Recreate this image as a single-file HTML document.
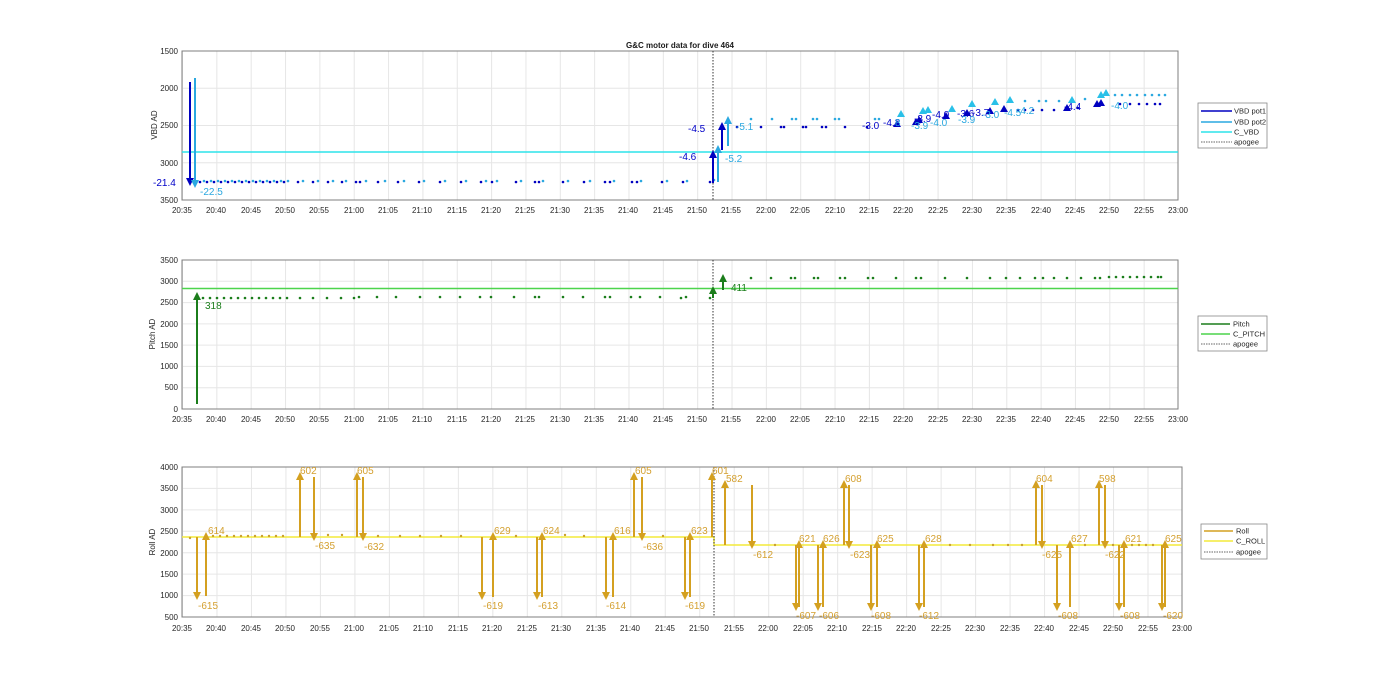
<!DOCTYPE html>
<html><head><meta charset="utf-8"><style>
html,body{margin:0;padding:0;background:#fff;}
svg{display:block;font-family:"Liberation Sans",Arial,sans-serif;}
.t{font-size:8px;fill:#262626;}
.tl{font-size:8px;fill:#262626;text-anchor:middle;}
.tr{font-size:8px;fill:#262626;text-anchor:end;}
.lg{font-size:7.5px;fill:#262626;}
.b1{fill:#0000c8;font-size:10px;}
.b2{fill:#2aa8e0;font-size:10px;}
.g{fill:#1b7d1b;font-size:10px;}
.r{fill:#d4a030;font-size:10px;}
</style></head><body>
<svg width="1400" height="693" viewBox="0 0 1400 693">
<defs>
<pattern id="vg" x="182" y="0" width="34.345" height="700" patternUnits="userSpaceOnUse"><line x1="0.5" y1="0" x2="0.5" y2="700" stroke="#e6e6e6" stroke-width="1"/></pattern>
</defs>
<rect width="1400" height="693" fill="#fff"/>
<text x="680" y="48" style="font-size:8px;font-weight:bold;fill:#1a1a1a" text-anchor="middle">G&amp;C motor data for dive 464</text>

<!-- ===== Panel 1 ===== -->
<rect x="182" y="51" width="996" height="149" fill="url(#vg)"/>
<g stroke="#e6e6e6"><line x1="182" y1="88.25" x2="1178" y2="88.25"/><line x1="182" y1="125.5" x2="1178" y2="125.5"/><line x1="182" y1="162.75" x2="1178" y2="162.75"/></g>
<rect x="182" y="51" width="996" height="149" fill="none" stroke="#7f7f7f" stroke-width="1"/>
<g class="tr"><text x="178" y="54">1500</text><text x="178" y="91">2000</text><text x="178" y="128">2500</text><text x="178" y="166">3000</text><text x="178" y="203">3500</text></g>
<text class="t" transform="translate(157,125) rotate(-90)" text-anchor="middle">VBD AD</text>
<g class="tl"><text x="182" y="213">20:35</text><text x="216" y="213">20:40</text><text x="251" y="213">20:45</text><text x="285" y="213">20:50</text><text x="319" y="213">20:55</text><text x="354" y="213">21:00</text><text x="388" y="213">21:05</text><text x="422" y="213">21:10</text><text x="457" y="213">21:15</text><text x="491" y="213">21:20</text><text x="525" y="213">21:25</text><text x="560" y="213">21:30</text><text x="594" y="213">21:35</text><text x="628" y="213">21:40</text><text x="663" y="213">21:45</text><text x="697" y="213">21:50</text><text x="731" y="213">21:55</text><text x="766" y="213">22:00</text><text x="800" y="213">22:05</text><text x="835" y="213">22:10</text><text x="869" y="213">22:15</text><text x="903" y="213">22:20</text><text x="938" y="213">22:25</text><text x="972" y="213">22:30</text><text x="1006" y="213">22:35</text><text x="1041" y="213">22:40</text><text x="1075" y="213">22:45</text><text x="1109" y="213">22:50</text><text x="1144" y="213">22:55</text><text x="1178" y="213">23:00</text></g>
<line x1="182" y1="152" x2="1178" y2="152" stroke="#2de3ea" stroke-width="1.5"/>
<line x1="713" y1="51" x2="713" y2="200" stroke="#333" stroke-width="1" stroke-dasharray="1.5,1.5"/>
<!-- dots pre apogee -->
<g fill="#0000c0">
<circle cx="200" cy="182" r="1.3"/><circle cx="207" cy="182" r="1.3"/><circle cx="214" cy="182" r="1.3"/><circle cx="221" cy="182" r="1.3"/><circle cx="228" cy="182" r="1.3"/><circle cx="235" cy="182" r="1.3"/><circle cx="242" cy="182" r="1.3"/><circle cx="249" cy="182" r="1.3"/><circle cx="256" cy="182" r="1.3"/><circle cx="263" cy="182" r="1.3"/><circle cx="270" cy="182" r="1.3"/><circle cx="277" cy="182" r="1.3"/><circle cx="284" cy="182" r="1.3"/><circle cx="298" cy="182" r="1.3"/><circle cx="313" cy="182" r="1.3"/><circle cx="328" cy="182" r="1.3"/><circle cx="342" cy="182" r="1.3"/><circle cx="356" cy="182" r="1.3"/><circle cx="360" cy="182" r="1.3"/><circle cx="378" cy="182" r="1.3"/><circle cx="398" cy="182" r="1.3"/><circle cx="419" cy="182" r="1.3"/><circle cx="440" cy="182" r="1.3"/><circle cx="461" cy="182" r="1.3"/><circle cx="481" cy="182" r="1.3"/><circle cx="492" cy="182" r="1.3"/><circle cx="516" cy="182" r="1.3"/><circle cx="535" cy="182" r="1.3"/><circle cx="539" cy="182" r="1.3"/><circle cx="563" cy="182" r="1.3"/><circle cx="584" cy="182" r="1.3"/><circle cx="605" cy="182" r="1.3"/><circle cx="610" cy="182" r="1.3"/><circle cx="632" cy="182" r="1.3"/><circle cx="637" cy="182" r="1.3"/><circle cx="662" cy="182" r="1.3"/><circle cx="683" cy="182" r="1.3"/><circle cx="710" cy="182" r="1.3"/>
</g>
<g fill="#2aa8e0">
<circle cx="204" cy="181" r="1.3"/><circle cx="211" cy="181" r="1.3"/><circle cx="218" cy="181" r="1.3"/><circle cx="225" cy="181" r="1.3"/><circle cx="232" cy="181" r="1.3"/><circle cx="239" cy="181" r="1.3"/><circle cx="246" cy="181" r="1.3"/><circle cx="253" cy="181" r="1.3"/><circle cx="260" cy="181" r="1.3"/><circle cx="267" cy="181" r="1.3"/><circle cx="274" cy="181" r="1.3"/><circle cx="281" cy="181" r="1.3"/><circle cx="288" cy="181" r="1.3"/><circle cx="303" cy="181" r="1.3"/><circle cx="318" cy="181" r="1.3"/><circle cx="333" cy="181" r="1.3"/><circle cx="346" cy="181" r="1.3"/><circle cx="366" cy="181" r="1.3"/><circle cx="385" cy="181" r="1.3"/><circle cx="404" cy="181" r="1.3"/><circle cx="424" cy="181" r="1.3"/><circle cx="445" cy="181" r="1.3"/><circle cx="466" cy="181" r="1.3"/><circle cx="486" cy="181" r="1.3"/><circle cx="497" cy="181" r="1.3"/><circle cx="521" cy="181" r="1.3"/><circle cx="543" cy="181" r="1.3"/><circle cx="568" cy="181" r="1.3"/><circle cx="590" cy="181" r="1.3"/><circle cx="614" cy="181" r="1.3"/><circle cx="641" cy="181" r="1.3"/><circle cx="667" cy="181" r="1.3"/><circle cx="687" cy="181" r="1.3"/><circle cx="714" cy="180" r="1.3"/>
</g>
<!-- dots post apogee -->
<g fill="#0000c0">
<circle cx="737" cy="127" r="1.3"/><circle cx="761" cy="127" r="1.3"/><circle cx="781" cy="127" r="1.3"/><circle cx="784" cy="127" r="1.3"/><circle cx="803" cy="127" r="1.3"/><circle cx="806" cy="127" r="1.3"/><circle cx="822" cy="127" r="1.3"/><circle cx="826" cy="127" r="1.3"/><circle cx="845" cy="127" r="1.3"/><circle cx="867" cy="127" r="1.3"/><circle cx="920" cy="122" r="1.3"/><circle cx="1018" cy="110" r="1.3"/><circle cx="1025" cy="110" r="1.3"/><circle cx="1033" cy="110" r="1.3"/><circle cx="1042" cy="110" r="1.3"/><circle cx="1054" cy="110" r="1.3"/><circle cx="1078" cy="108" r="1.3"/><circle cx="1120" cy="104" r="1.3"/><circle cx="1130" cy="104" r="1.3"/><circle cx="1139" cy="104" r="1.3"/><circle cx="1147" cy="104" r="1.3"/><circle cx="1155" cy="104" r="1.3"/><circle cx="1160" cy="104" r="1.3"/>
</g>
<g fill="#2aa8e0">
<circle cx="751" cy="119" r="1.3"/><circle cx="772" cy="119" r="1.3"/><circle cx="792" cy="119" r="1.3"/><circle cx="796" cy="119" r="1.3"/><circle cx="813" cy="119" r="1.3"/><circle cx="817" cy="119" r="1.3"/><circle cx="835" cy="119" r="1.3"/><circle cx="839" cy="119" r="1.3"/><circle cx="875" cy="119" r="1.3"/><circle cx="879" cy="119" r="1.3"/><circle cx="1025" cy="101" r="1.3"/><circle cx="1039" cy="101" r="1.3"/><circle cx="1046" cy="101" r="1.3"/><circle cx="1059" cy="101" r="1.3"/><circle cx="1085" cy="99" r="1.3"/><circle cx="1115" cy="95" r="1.3"/><circle cx="1122" cy="95" r="1.3"/><circle cx="1130" cy="95" r="1.3"/><circle cx="1137" cy="95" r="1.3"/><circle cx="1145" cy="95" r="1.3"/><circle cx="1152" cy="95" r="1.3"/><circle cx="1159" cy="95" r="1.3"/><circle cx="1165" cy="95" r="1.3"/>
</g>
<!-- VBD arrows -->
<g stroke-width="2">
<line x1="190" y1="82" x2="190" y2="182" stroke="#0000c0"/>
<line x1="195" y1="78" x2="195" y2="184" stroke="#2aa8e0"/>
<line x1="713" y1="183" x2="713" y2="156" stroke="#0000c0"/>
<line x1="718" y1="182" x2="718" y2="150" stroke="#2aa8e0"/>
<line x1="722" y1="150" x2="722" y2="126" stroke="#0000c0"/>
<line x1="728" y1="146" x2="728" y2="120" stroke="#2aa8e0"/>
</g>
<g fill="#0000c0">
<polygon points="186,178 194,178 190,186"/>
<polygon points="709,158 717,158 713,150"/>
<polygon points="718,130 726,130 722,122"/>
<polygon points="893,127 901,127 897,120"/><polygon points="912,125 920,125 916,118"/><polygon points="915,123 923,123 919,116"/><polygon points="942,119 950,119 946,112"/><polygon points="963,116 971,116 967,109"/><polygon points="986,114 994,114 990,107"/><polygon points="1000,112 1008,112 1004,105"/><polygon points="1063,111 1071,111 1067,104"/><polygon points="1093,107 1101,107 1097,100"/><polygon points="1097,106 1105,106 1101,99"/>
</g>
<g fill="#2aa8e0">
<polygon points="191,180 199,180 195,188"/>
<polygon points="714,153 722,153 718,145"/>
<polygon points="724,124 732,124 728,116"/>
</g>
<g fill="#29c0e8">
<polygon points="897,117 905,117 901,110"/><polygon points="919,114 927,114 923,107"/><polygon points="924,113 932,113 928,106"/><polygon points="948,112 956,112 952,105"/><polygon points="968,107 976,107 972,100"/><polygon points="991,105 999,105 995,98"/><polygon points="1006,103 1014,103 1010,96"/><polygon points="1068,103 1076,103 1072,96"/><polygon points="1097,98 1105,98 1101,91"/><polygon points="1102,96 1110,96 1106,89"/>
</g>
<text class="b1" x="153" y="186">-21.4</text>
<text class="b2" x="200" y="195">-22.5</text>
<text class="b1" x="679" y="160">-4.6</text>
<text class="b2" x="725" y="162">-5.2</text>
<text class="b1" x="688" y="132">-4.5</text>
<text class="b2" x="736" y="130">-5.1</text>
<g class="b1"><text x="862" y="129">-3.0</text><text x="883" y="126">-4.3</text><text x="914" y="122">-3.9</text><text x="932" y="118">-4.0</text><text x="957" y="117">-3.6</text><text x="972" y="116">-3.7</text><text x="1064" y="110">-4.4</text></g>
<g class="b2"><text x="895" y="126">8</text><text x="911" y="129">-3.9</text><text x="930" y="126">-4.0</text><text x="958" y="123">-3.9</text><text x="982" y="118">-3.0</text><text x="1004" y="116">-4.5</text><text x="1017" y="114">-4.2</text><text x="1111" y="109">-4.0</text></g>
<!-- legend 1 -->
<rect x="1198" y="103" width="69" height="45" fill="#fff" stroke="#888" stroke-width="0.8"/>
<line x1="1201" y1="111" x2="1232" y2="111" stroke="#0000c0" stroke-width="1.5"/><text class="lg" x="1234" y="113.5">VBD pot1</text>
<line x1="1201" y1="122" x2="1232" y2="122" stroke="#2aa8e0" stroke-width="1.5"/><text class="lg" x="1234" y="124.5">VBD pot2</text>
<line x1="1201" y1="132" x2="1232" y2="132" stroke="#2de3ea" stroke-width="1.5"/><text class="lg" x="1234" y="134.5">C_VBD</text>
<line x1="1201" y1="142" x2="1232" y2="142" stroke="#333" stroke-width="0.8" stroke-dasharray="1.5,1"/><text class="lg" x="1234" y="144.5">apogee</text>

<!-- ===== Panel 2 ===== -->
<rect x="182" y="260" width="996" height="149" fill="url(#vg)"/>
<g stroke="#e6e6e6"><line x1="182" y1="281.3" x2="1178" y2="281.3"/><line x1="182" y1="302.6" x2="1178" y2="302.6"/><line x1="182" y1="323.9" x2="1178" y2="323.9"/><line x1="182" y1="345.1" x2="1178" y2="345.1"/><line x1="182" y1="366.4" x2="1178" y2="366.4"/><line x1="182" y1="387.7" x2="1178" y2="387.7"/></g>
<rect x="182" y="260" width="996" height="149" fill="none" stroke="#7f7f7f"/>
<g class="tr"><text x="178" y="263">3500</text><text x="178" y="284">3000</text><text x="178" y="305">2500</text><text x="178" y="327">2000</text><text x="178" y="348">1500</text><text x="178" y="369">1000</text><text x="178" y="390">500</text><text x="178" y="412">0</text></g>
<text class="t" transform="translate(155,334) rotate(-90)" text-anchor="middle">Pitch AD</text>
<g class="tl"><text x="182" y="422">20:35</text><text x="216" y="422">20:40</text><text x="251" y="422">20:45</text><text x="285" y="422">20:50</text><text x="319" y="422">20:55</text><text x="354" y="422">21:00</text><text x="388" y="422">21:05</text><text x="422" y="422">21:10</text><text x="457" y="422">21:15</text><text x="491" y="422">21:20</text><text x="525" y="422">21:25</text><text x="560" y="422">21:30</text><text x="594" y="422">21:35</text><text x="628" y="422">21:40</text><text x="663" y="422">21:45</text><text x="697" y="422">21:50</text><text x="731" y="422">21:55</text><text x="766" y="422">22:00</text><text x="800" y="422">22:05</text><text x="835" y="422">22:10</text><text x="869" y="422">22:15</text><text x="903" y="422">22:20</text><text x="938" y="422">22:25</text><text x="972" y="422">22:30</text><text x="1006" y="422">22:35</text><text x="1041" y="422">22:40</text><text x="1075" y="422">22:45</text><text x="1109" y="422">22:50</text><text x="1144" y="422">22:55</text><text x="1178" y="422">23:00</text></g>
<line x1="182" y1="288.5" x2="1178" y2="288.5" stroke="#4cd44c" stroke-width="1.5"/>
<line x1="713" y1="260" x2="713" y2="409" stroke="#333" stroke-dasharray="1.5,1.5"/>
<g fill="#1b7d1b">
<circle cx="203" cy="298" r="1.3"/><circle cx="210" cy="298" r="1.3"/><circle cx="217" cy="298" r="1.3"/><circle cx="224" cy="298" r="1.3"/><circle cx="231" cy="298" r="1.3"/><circle cx="238" cy="298" r="1.3"/><circle cx="245" cy="298" r="1.3"/><circle cx="252" cy="298" r="1.3"/><circle cx="259" cy="298" r="1.3"/><circle cx="266" cy="298" r="1.3"/><circle cx="273" cy="298" r="1.3"/><circle cx="280" cy="298" r="1.3"/><circle cx="287" cy="298" r="1.3"/><circle cx="300" cy="298" r="1.3"/><circle cx="313" cy="298" r="1.3"/><circle cx="327" cy="298" r="1.3"/><circle cx="341" cy="298" r="1.3"/><circle cx="354" cy="298" r="1.3"/><circle cx="359" cy="297" r="1.3"/><circle cx="377" cy="297" r="1.3"/><circle cx="396" cy="297" r="1.3"/><circle cx="420" cy="297" r="1.3"/><circle cx="440" cy="297" r="1.3"/><circle cx="460" cy="297" r="1.3"/><circle cx="480" cy="297" r="1.3"/><circle cx="491" cy="297" r="1.3"/><circle cx="514" cy="297" r="1.3"/><circle cx="535" cy="297" r="1.3"/><circle cx="539" cy="297" r="1.3"/><circle cx="563" cy="297" r="1.3"/><circle cx="583" cy="297" r="1.3"/><circle cx="605" cy="297" r="1.3"/><circle cx="610" cy="297" r="1.3"/><circle cx="631" cy="297" r="1.3"/><circle cx="640" cy="297" r="1.3"/><circle cx="660" cy="297" r="1.3"/><circle cx="681" cy="298" r="1.3"/><circle cx="686" cy="297" r="1.3"/><circle cx="710" cy="298" r="1.3"/>
<circle cx="751" cy="278" r="1.3"/><circle cx="771" cy="278" r="1.3"/><circle cx="791" cy="278" r="1.3"/><circle cx="795" cy="278" r="1.3"/><circle cx="814" cy="278" r="1.3"/><circle cx="818" cy="278" r="1.3"/><circle cx="840" cy="278" r="1.3"/><circle cx="845" cy="278" r="1.3"/><circle cx="868" cy="278" r="1.3"/><circle cx="873" cy="278" r="1.3"/><circle cx="896" cy="278" r="1.3"/><circle cx="916" cy="278" r="1.3"/><circle cx="921" cy="278" r="1.3"/><circle cx="945" cy="278" r="1.3"/><circle cx="967" cy="278" r="1.3"/><circle cx="990" cy="278" r="1.3"/><circle cx="1006" cy="278" r="1.3"/><circle cx="1020" cy="278" r="1.3"/><circle cx="1035" cy="278" r="1.3"/><circle cx="1043" cy="278" r="1.3"/><circle cx="1054" cy="278" r="1.3"/><circle cx="1067" cy="278" r="1.3"/><circle cx="1081" cy="278" r="1.3"/><circle cx="1095" cy="278" r="1.3"/><circle cx="1100" cy="278" r="1.3"/><circle cx="1109" cy="277" r="1.3"/><circle cx="1116" cy="277" r="1.3"/><circle cx="1123" cy="277" r="1.3"/><circle cx="1130" cy="277" r="1.3"/><circle cx="1137" cy="277" r="1.3"/><circle cx="1144" cy="277" r="1.3"/><circle cx="1151" cy="277" r="1.3"/><circle cx="1158" cy="277" r="1.3"/><circle cx="1161" cy="277" r="1.3"/>
</g>
<g stroke="#1b7d1b" stroke-width="2"><line x1="197" y1="404" x2="197" y2="298"/><line x1="713" y1="298" x2="713" y2="292"/><line x1="723" y1="290" x2="723" y2="280"/></g>
<g fill="#1b7d1b"><polygon points="193,300 201,300 197,292"/><polygon points="709,294 717,294 713,286"/><polygon points="719,282 727,282 723,274"/></g>
<text class="g" x="205" y="309">318</text>
<text class="g" x="731" y="291">411</text>
<rect x="1198" y="316" width="69" height="35" fill="#fff" stroke="#888" stroke-width="0.8"/>
<line x1="1201" y1="324" x2="1230" y2="324" stroke="#1b7d1b" stroke-width="1.5"/><text class="lg" x="1233" y="326.5">Pitch</text>
<line x1="1201" y1="334" x2="1230" y2="334" stroke="#4cd44c" stroke-width="1.5"/><text class="lg" x="1233" y="336.5">C_PITCH</text>
<line x1="1201" y1="344" x2="1230" y2="344" stroke="#333" stroke-width="0.8" stroke-dasharray="1.5,1"/><text class="lg" x="1233" y="346.5">apogee</text>

<!-- ===== Panel 3 ===== -->
<g transform="translate(182,0) scale(1.004,1) translate(-182,0)">
<rect x="182" y="467" width="996" height="150" fill="url(#vg)"/>
</g>
<g stroke="#e6e6e6"><line x1="182" y1="488.4" x2="1182" y2="488.4"/><line x1="182" y1="509.9" x2="1182" y2="509.9"/><line x1="182" y1="531.3" x2="1182" y2="531.3"/><line x1="182" y1="552.7" x2="1182" y2="552.7"/><line x1="182" y1="574.1" x2="1182" y2="574.1"/><line x1="182" y1="595.6" x2="1182" y2="595.6"/></g>
<rect x="182" y="467" width="1000" height="150" fill="none" stroke="#7f7f7f"/>
<g class="tr"><text x="178" y="470">4000</text><text x="178" y="491">3500</text><text x="178" y="513">3000</text><text x="178" y="534">2500</text><text x="178" y="556">2000</text><text x="178" y="577">1500</text><text x="178" y="598">1000</text><text x="178" y="620">500</text></g>
<text class="t" transform="translate(155,542) rotate(-90)" text-anchor="middle">Roll AD</text>
<g class="tl"><text x="182" y="631">20:35</text><text x="216" y="631">20:40</text><text x="251" y="631">20:45</text><text x="285" y="631">20:50</text><text x="320" y="631">20:55</text><text x="354" y="631">21:00</text><text x="389" y="631">21:05</text><text x="423" y="631">21:10</text><text x="458" y="631">21:15</text><text x="492" y="631">21:20</text><text x="527" y="631">21:25</text><text x="561" y="631">21:30</text><text x="596" y="631">21:35</text><text x="630" y="631">21:40</text><text x="665" y="631">21:45</text><text x="699" y="631">21:50</text><text x="734" y="631">21:55</text><text x="768" y="631">22:00</text><text x="803" y="631">22:05</text><text x="837" y="631">22:10</text><text x="872" y="631">22:15</text><text x="906" y="631">22:20</text><text x="941" y="631">22:25</text><text x="975" y="631">22:30</text><text x="1010" y="631">22:35</text><text x="1044" y="631">22:40</text><text x="1079" y="631">22:45</text><text x="1113" y="631">22:50</text><text x="1148" y="631">22:55</text><text x="1182" y="631">23:00</text></g>
<polyline points="182,537 714,537 714,545 1182,545" fill="none" stroke="#f3ea3a" stroke-width="1.5"/>
<line x1="714" y1="467" x2="714" y2="617" stroke="#333" stroke-dasharray="1.5,1.5"/>
<g fill="#c9a030">
<circle cx="190" cy="538" r="1.2"/><circle cx="213" cy="536" r="1.2"/><circle cx="220" cy="536" r="1.2"/><circle cx="227" cy="536" r="1.2"/><circle cx="234" cy="536" r="1.2"/><circle cx="241" cy="536" r="1.2"/><circle cx="248" cy="536" r="1.2"/><circle cx="255" cy="536" r="1.2"/><circle cx="262" cy="536" r="1.2"/><circle cx="269" cy="536" r="1.2"/><circle cx="276" cy="536" r="1.2"/><circle cx="283" cy="536" r="1.2"/><circle cx="328" cy="535" r="1.2"/><circle cx="342" cy="535" r="1.2"/><circle cx="378" cy="536" r="1.2"/><circle cx="400" cy="536" r="1.2"/><circle cx="420" cy="536" r="1.2"/><circle cx="441" cy="536" r="1.2"/><circle cx="461" cy="536" r="1.2"/><circle cx="516" cy="536" r="1.2"/><circle cx="565" cy="535" r="1.2"/><circle cx="584" cy="536" r="1.2"/><circle cx="663" cy="536" r="1.2"/>
<circle cx="775" cy="545" r="1.2"/><circle cx="950" cy="545" r="1.2"/><circle cx="970" cy="545" r="1.2"/><circle cx="993" cy="545" r="1.2"/><circle cx="1008" cy="545" r="1.2"/><circle cx="1022" cy="545" r="1.2"/><circle cx="1085" cy="545" r="1.2"/><circle cx="1113" cy="545" r="1.2"/><circle cx="1132" cy="545" r="1.2"/><circle cx="1139" cy="545" r="1.2"/><circle cx="1146" cy="545" r="1.2"/><circle cx="1153" cy="545" r="1.2"/>
</g>
<g stroke="#d4a020" stroke-width="2">
<line x1="197" y1="537" x2="197" y2="594"/><line x1="206" y1="596" x2="206" y2="540"/>
<line x1="300" y1="537" x2="300" y2="477"/><line x1="314" y1="477" x2="314" y2="534"/>
<line x1="357" y1="537" x2="357" y2="477"/><line x1="363" y1="477" x2="363" y2="534"/>
<line x1="482" y1="537" x2="482" y2="594"/><line x1="493" y1="597" x2="493" y2="540"/>
<line x1="537" y1="537" x2="537" y2="594"/><line x1="542" y1="597" x2="542" y2="540"/>
<line x1="606" y1="537" x2="606" y2="594"/><line x1="613" y1="597" x2="613" y2="540"/>
<line x1="634" y1="537" x2="634" y2="477"/><line x1="642" y1="477" x2="642" y2="534"/>
<line x1="685" y1="537" x2="685" y2="594"/><line x1="690" y1="597" x2="690" y2="540"/>
<line x1="712" y1="537" x2="712" y2="477"/><line x1="725" y1="545" x2="725" y2="485"/>
<line x1="752" y1="485" x2="752" y2="542"/>
<line x1="796" y1="545" x2="796" y2="604"/><line x1="799" y1="607" x2="799" y2="548"/>
<line x1="818" y1="545" x2="818" y2="604"/><line x1="823" y1="607" x2="823" y2="548"/>
<line x1="844" y1="545" x2="844" y2="485"/><line x1="849" y1="485" x2="849" y2="542"/>
<line x1="871" y1="545" x2="871" y2="604"/><line x1="877" y1="607" x2="877" y2="548"/>
<line x1="919" y1="545" x2="919" y2="604"/><line x1="924" y1="607" x2="924" y2="548"/>
<line x1="1036" y1="545" x2="1036" y2="485"/><line x1="1042" y1="485" x2="1042" y2="542"/>
<line x1="1057" y1="545" x2="1057" y2="604"/><line x1="1070" y1="607" x2="1070" y2="548"/>
<line x1="1099" y1="545" x2="1099" y2="485"/><line x1="1105" y1="485" x2="1105" y2="542"/>
<line x1="1119" y1="545" x2="1119" y2="604"/><line x1="1124" y1="607" x2="1124" y2="548"/>
<line x1="1162" y1="545" x2="1162" y2="604"/><line x1="1165" y1="607" x2="1165" y2="548"/>
</g>
<g fill="#d4a020">
<polygon points="193,592 201,592 197,600"/><polygon points="202,540 210,540 206,532"/>
<polygon points="296,480 304,480 300,472"/><polygon points="310,533 318,533 314,541"/>
<polygon points="353,480 361,480 357,472"/><polygon points="359,533 367,533 363,541"/>
<polygon points="478,592 486,592 482,600"/><polygon points="489,540 497,540 493,532"/>
<polygon points="533,592 541,592 537,600"/><polygon points="538,540 546,540 542,532"/>
<polygon points="602,592 610,592 606,600"/><polygon points="609,540 617,540 613,532"/>
<polygon points="630,480 638,480 634,472"/><polygon points="638,533 646,533 642,541"/>
<polygon points="681,592 689,592 685,600"/><polygon points="686,540 694,540 690,532"/>
<polygon points="708,480 716,480 712,472"/><polygon points="721,488 729,488 725,480"/>
<polygon points="748,541 756,541 752,549"/>
<polygon points="792,603 800,603 796,611"/><polygon points="795,548 803,548 799,540"/>
<polygon points="814,603 822,603 818,611"/><polygon points="819,548 827,548 823,540"/>
<polygon points="840,488 848,488 844,480"/><polygon points="845,541 853,541 849,549"/>
<polygon points="867,603 875,603 871,611"/><polygon points="873,548 881,548 877,540"/>
<polygon points="915,603 923,603 919,611"/><polygon points="920,548 928,548 924,540"/>
<polygon points="1032,488 1040,488 1036,480"/><polygon points="1038,541 1046,541 1042,549"/>
<polygon points="1053,603 1061,603 1057,611"/><polygon points="1066,548 1074,548 1070,540"/>
<polygon points="1095,488 1103,488 1099,480"/><polygon points="1101,541 1109,541 1105,549"/>
<polygon points="1115,603 1123,603 1119,611"/><polygon points="1120,548 1128,548 1124,540"/>
<polygon points="1158,603 1166,603 1162,611"/><polygon points="1161,548 1169,548 1165,540"/>
</g>
<g class="r">
<text x="198" y="609">-615</text><text x="208" y="534">614</text>
<text x="300" y="474">602</text><text x="315" y="549">-635</text>
<text x="357" y="474">605</text><text x="364" y="550">-632</text>
<text x="483" y="609">-619</text><text x="494" y="534">629</text>
<text x="538" y="609">-613</text><text x="543" y="534">624</text>
<text x="606" y="609">-614</text><text x="614" y="534">616</text>
<text x="635" y="474">605</text><text x="643" y="550">-636</text>
<text x="685" y="609">-619</text><text x="691" y="534">623</text>
<text x="712" y="474">601</text><text x="726" y="482">582</text>
<text x="753" y="558">-612</text>
<text x="796" y="619">-607</text><text x="799" y="542">621</text>
<text x="819" y="619">-606</text><text x="823" y="542">626</text>
<text x="845" y="482">608</text><text x="850" y="558">-623</text>
<text x="871" y="619">-608</text><text x="877" y="542">625</text>
<text x="919" y="619">-612</text><text x="925" y="542">628</text>
<text x="1036" y="482">604</text><text x="1042" y="558">-625</text>
<text x="1058" y="619">-608</text><text x="1071" y="542">627</text>
<text x="1099" y="482">598</text><text x="1105" y="558">-622</text>
<text x="1120" y="619">-608</text><text x="1125" y="542">621</text>
<text x="1163" y="619">-620</text><text x="1165" y="542">625</text>
</g>
<rect x="1201" y="524" width="66" height="35" fill="#fff" stroke="#888" stroke-width="0.8"/>
<line x1="1204" y1="531" x2="1233" y2="531" stroke="#d4a020" stroke-width="1.5"/><text class="lg" x="1236" y="533.5">Roll</text>
<line x1="1204" y1="541" x2="1233" y2="541" stroke="#f3ea3a" stroke-width="1.5"/><text class="lg" x="1236" y="543.5">C_ROLL</text>
<line x1="1204" y1="552" x2="1233" y2="552" stroke="#333" stroke-width="0.8" stroke-dasharray="1.5,1"/><text class="lg" x="1236" y="554.5">apogee</text>
</svg>
</body></html>
